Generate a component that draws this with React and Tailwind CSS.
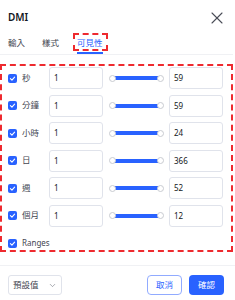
import { X, ChevronDown } from 'lucide-react';

const ROWS = [
  { label: '秒', max: '59' },
  { label: '分鐘', max: '59' },
  { label: '小時', max: '24' },
  { label: '日', max: '366' },
  { label: '週', max: '52' },
  { label: '個月', max: '12' },
];

function Check() {
  return (
    <span className="w-[9px] h-[9px] rounded-[2px] bg-[#2962ff] flex items-center justify-center shrink-0">
      <svg width="7" height="7" viewBox="0 0 10 10" fill="none">
        <path d="M2 5.2 L4.2 7.2 L8 3" stroke="white" strokeWidth="1.6" strokeLinecap="round" strokeLinejoin="round" />
      </svg>
    </span>
  );
}

function Field({ value }) {
  return (
    <div className="w-[54px] h-[22px] border border-[#e0e3eb] rounded-[3px] flex items-center pl-[4px] text-[8px] text-[#131722]">
      {value}
    </div>
  );
}

function Slider() {
  return (
    <div className="w-[55px] h-[8px] ml-[6px] mr-[5px] relative flex items-center">
      <div className="h-[4px] mx-[4px] flex-1 bg-[#2962ff] rounded-[1px]" />
      <span className="absolute left-0 w-[7px] h-[7px] rounded-full bg-white border border-[#c9cbd1]" />
      <span className="absolute right-0 w-[7px] h-[7px] rounded-full bg-white border border-[#c9cbd1]" />
    </div>
  );
}

export default function App() {
  return (
    <div className="w-[235px] h-[300px] bg-white overflow-hidden font-['Noto_Sans','Noto_Sans_CJK_TC',sans-serif] text-[#131722]">
      {/* header */}
      <div className="h-[34px] flex items-center justify-between pl-[8px] pr-[8px] pt-[1px]">
        <span className="text-[10px] font-semibold">DMI</span>
        <X size={20} strokeWidth={1.3} className="text-[#4a4d57]" />
      </div>

      {/* tabs */}
      <div className="h-[20px] flex gap-[17px] pl-[8px] text-[8.5px] text-[#434651]">
        <div className="h-full flex items-center pb-[2px]">輸入</div>
        <div className="h-full flex items-center pb-[2px]">樣式</div>
        <div className="h-full flex items-center pb-[2px] relative text-[#2962ff] ml-[1px]">
          可見性
          <span className="absolute left-0 right-0 bottom-0 h-[2px] bg-[#2962ff]" />
          <span className="absolute -left-[4px] -right-[5px] -top-[1px] bottom-[3px] border-2 border-dashed border-[#ee2a2f]" />
        </div>
      </div>
      <div className="h-px w-[233px] bg-[#f0f1f4]" />

      {/* visibility box */}
      <div className="mt-[9px] w-[233px] h-[188px] border-2 border-dashed border-[#ee2a2f] pt-[1px] flex flex-col gap-[5.5px]">
        {ROWS.map((r) => (
          <div key={r.label} className="h-[22px] flex items-center pl-[6px]">
            <Check />
            <span className="w-[27px] ml-[5px] text-[8.5px] text-[#434651]">{r.label}</span>
            <Field value="1" />
            <Slider />
            <Field value={r.max} />
          </div>
        ))}
        <div className="h-[14px] mt-[4px] flex items-center pl-[6px]">
          <Check />
          <span className="ml-[5px] text-[8px] text-[#434651]">Ranges</span>
        </div>
      </div>

      {/* footer */}
      <div className="mt-[13px] h-px bg-[#f0f1f4]" />
      <div className="mt-[9px] flex items-center pl-[8px] pr-[11px]">
        <div className="w-[54px] h-[20px] border border-[#e0e3eb] rounded-[3px] flex items-center justify-between pl-[4px] pr-[4px] text-[8.5px] text-[#434651]">
          預設值
          <ChevronDown size={9} strokeWidth={1.5} className="text-[#6a6d78]" />
        </div>
        <div className="flex-1" />
        <button className="w-[35px] h-[20px] border border-[#91abff] rounded-[4px] text-[8.5px] text-[#2962ff] flex items-center justify-center">
          取消
        </button>
        <button className="ml-[7px] w-[35px] h-[20px] bg-[#2962ff] rounded-[4px] text-[8.5px] text-white flex items-center justify-center">
          確認
        </button>
      </div>
    </div>
  );
}
